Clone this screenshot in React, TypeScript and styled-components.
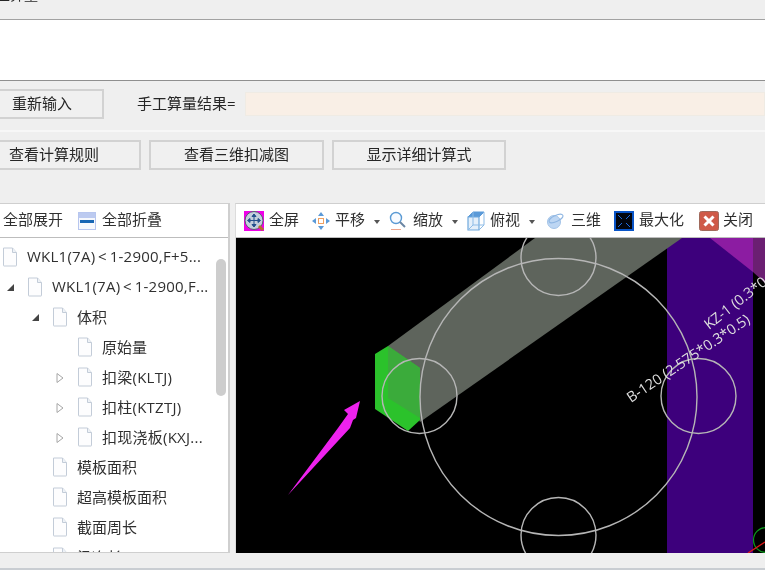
import React from "react";
import styled, { createGlobalStyle } from "styled-components";

const Global = createGlobalStyle`
  html, body { margin: 0; padding: 0; background: #efefef; overflow: hidden; }
  #root { width: 765px; height: 570px; overflow: hidden; }
`;

const Page = styled.div`
  width: 765px; height: 570px; overflow: hidden; background: #efefef; color: #262626;
  display: flex; flex-direction: column;
  font-family: "Open Sans", "Noto Sans CJK SC", "Noto Sans", sans-serif; font-size: 15px;
  filter: blur(0.45px);
`;
const TitleBar = styled.div`
  height: 19px; flex: none; overflow: hidden; border-bottom: 1px solid #a2a2a2;
`;
const TitleText = styled.div`
  margin: -16px 0 0 -18px; font-size: 14px; line-height: 22px; white-space: nowrap;
`;
const NoteArea = styled.div`
  height: 60px; flex: none; background: #fff; border-bottom: 1px solid #8f8f8f;
`;
const InputRow = styled.div`
  height: 41px; flex: none; padding-top: 8px; display: flex; align-items: flex-start;
  border-bottom: 2px solid #f7f7f7; margin-left: -20px;
`;
const Btn = styled.div<{ $w: number }>`
  width: ${p => p.$w}px; height: 30px; box-sizing: border-box; flex: none; padding-bottom: 2px;
  border: 2px solid #d2d2d2; background: #f0f0f0; display: flex;
  align-items: center; justify-content: center; line-height: 1; white-space: nowrap;
`;
const ResultLabel = styled.div`
  margin-left: 33px; height: 30px; line-height: 28px; width: 108px; flex: none; white-space: nowrap;
`;
const ResultInput = styled.div`
  margin-top: 3px; flex: 1; height: 24px; box-sizing: border-box;
  background: #f9efe6; border: 1px solid #efebe4;
`;
const ActionRow = styled.div`
  height: 30px; flex: none; margin: 8px 0 0 -33px; display: flex; gap: 8px;
`;
const Panels = styled.div`
  margin-top: 33px; height: 350px; flex: none; display: flex; gap: 5px;
`;
const LeftPanel = styled.div`
  width: 230px; flex: none; box-sizing: border-box; display: flex; flex-direction: column;
  border: 1px solid #cfcfcf; border-left: 0; border-right-width: 2px; background: #fff;
`;
const RightPanel = styled.div`
  flex: 1; min-width: 0; box-sizing: border-box; display: flex; flex-direction: column;
  border-top: 1px solid #cfcfcf; border-left: 1px solid #dcdcdc; background: #fff;
`;
const Toolbar = styled.div`
  height: 33px; flex: none; display: flex; align-items: center; background: #fff;
  border-bottom: 1px solid #bdbdbd; white-space: nowrap; color: #303030;
`;
const ToolItem = styled.div<{ $ml: number; $gap: number }>`
  display: flex; align-items: center; flex: none; height: 26px;
  margin-left: ${p => p.$ml}px; gap: ${p => p.$gap}px; line-height: 1;
`;
const ToolLabel = styled.span`
  margin-top: -2px;
`;
const Caret = styled.span<{ $ml: number }>`
  width: 0; height: 0; margin-left: ${p => p.$ml}px; margin-top: 2px;
  border: 3px solid transparent; border-top: 4px solid #555; border-bottom: 0;
`;
const Tree = styled.div`
  flex: 1; min-height: 0; overflow: hidden; position: relative; padding-top: 4px;
`;
const Row = styled.div<{ $level: number }>`
  height: 30px; display: flex; align-items: center; white-space: nowrap;
  padding-left: ${p => 2 + p.$level * 25}px; gap: 9px; position: relative; color: #303030;
`;
const RowText = styled.span<{ $latin: boolean }>`
  margin-top: -2px; letter-spacing: ${p => (p.$latin ? "0.25px" : "0")};
`;
const Toggle = styled.span`
  position: absolute; top: 10px; margin-left: -22px; display: flex;
`;
const Scrollbar = styled.div`
  position: absolute; left: 216px; top: 21px; width: 10px; height: 137px;
  border-radius: 5px; background: #cdcdcd;
`;
const Canvas = styled.div`
  flex: 1; min-height: 0; background: #000; display: flex;
`;
const Scene = styled.svg`
  display: block; width: 529px; height: 315px; flex: none;
`;
const SceneLabel = styled.text`
  font-family: "Open Sans", "Liberation Sans", sans-serif; font-size: 14.5px; fill: #dedede;
`;
const BottomBar = styled.div`
  height: 15px; flex: none; background: #efefef; border-bottom: 2px solid #c9cdd2;
`;

const Doc = () => (
  <svg width="16" height="20" viewBox="0 0 16 20" style={{ flex: "none" }}>
    <path d="M1.5 1h9l4 4.5V18.5q0 .5-.5.5H2q-.5 0-.5-.5z" fill="#fdfdfe" stroke="#c3ccd8" />
    <path d="M10.5 1v4.5h4" fill="#eef2f7" stroke="#c3ccd8" />
  </svg>
);
const Open = () => (
  <svg width="10" height="10" viewBox="0 0 10 10"><path d="M9 2v7H2z" fill="#444" /></svg>
);
const Closed = () => (
  <svg width="10" height="12" viewBox="0 0 10 12"><path d="M2 1.5l6 4.5-6 4.5z" fill="#fff" stroke="#a6a6a6" /></svg>
);

const FullIcon = () => (
  <svg width="20" height="20" viewBox="0 0 20 20">
    <rect width="20" height="20" fill="#f000e8" />
    <circle cx="10" cy="9.5" r="9" fill="#c4cfdc" stroke="#55606f" />
    <path d="M15 15l4 4" stroke="#b5702c" strokeWidth="3" />
    <path d="M10 3.5v12M4 9.5h12M10 3l-2 2.5h4zM10 16l-2-2.5h4zM3.5 9.5l2.5-2v4zM16.5 9.5l-2.5-2v4z" fill="#24508c" stroke="#24508c" />
  </svg>
);
const PanIcon = () => (
  <svg width="18" height="18" viewBox="0 0 18 18">
    <rect x="6.5" y="6.5" width="5" height="5" fill="#fff" stroke="#f0a060" />
    <path d="M9 0l3 4H6zM9 18l3-4H6zM0 9l4-3v6zM18 9l-4-3v6z" fill="#5b9ad8" />
  </svg>
);
const ZoomIcon = () => (
  <svg width="20" height="20" viewBox="0 0 20 20">
    <circle cx="8" cy="7" r="5.5" fill="#f8fbff" stroke="#5a9ad4" strokeWidth="1.4" />
    <path d="M12 11l5 5" stroke="#6b86a3" strokeWidth="2" />
    <path d="M3 18.5h10" stroke="#eda58c" />
  </svg>
);
const TopIcon = () => (
  <svg width="18" height="20" viewBox="0 0 18 20" fill="none" stroke="#8dbbe6">
    <path d="M1 6l5-5h11l-5 5z" fill="#5b9ad8" stroke="#5b9ad8" />
    <path d="M1 6h11v13H1z" fill="#e4effa" stroke="#6fa8dc" strokeWidth="1.2" />
    <path d="M12 19l5-5V1M1 19l5-5h11M6 14V1" strokeWidth="1" />
  </svg>
);
const OrbitIcon = () => (
  <svg width="18" height="18" viewBox="0 0 18 18">
    <circle cx="8" cy="10" r="6.5" fill="#bdd6f3" stroke="#a4c4e8" />
    <ellipse cx="10" cy="6.5" rx="7.5" ry="3" fill="none" stroke="#8fb6e2" transform="rotate(-25 10 6.5)" />
  </svg>
);
const MaxIcon = () => (
  <svg width="20" height="20" viewBox="0 0 20 20">
    <rect x="1" y="1" width="18" height="18" fill="#02060f" stroke="#0a55c8" strokeWidth="2" />
    <path d="M4 4l4 4M16 4l-4 4M4 16l4-4M16 16l-4-4" stroke="#1e6be0" />
  </svg>
);
const CloseIcon = () => (
  <svg width="20" height="20" viewBox="0 0 20 20">
    <rect x=".5" y=".5" width="19" height="19" rx="2" fill="#cf5a48" stroke="#a06a5c" />
    <path d="M5.5 5.5l9 9M14.5 5.5l-9 9" stroke="#fff" strokeWidth="3" />
  </svg>
);
const CollapseIcon = () => (
  <svg width="18" height="18" viewBox="0 0 18 18">
    <rect x=".5" y=".5" width="17" height="17" fill="#f6f8fd" stroke="#b7c6ef" />
    <rect x="1" y="1" width="16" height="5" fill="#bccaf0" />
    <rect x="2" y="8" width="14" height="3" fill="#1766b4" />
  </svg>
);

const tools = [
  { label: "全屏", icon: <FullIcon />, ml: 8, gap: 5 },
  { label: "平移", icon: <PanIcon />, ml: 13, gap: 5, caret: 9 },
  { label: "缩放", icon: <ZoomIcon />, ml: 8, gap: 5, caret: 9 },
  { label: "俯视", icon: <TopIcon />, ml: 9, gap: 5, caret: 9 },
  { label: "三维", icon: <OrbitIcon />, ml: 11, gap: 7 },
  { label: "最大化", icon: <MaxIcon />, ml: 13, gap: 5 },
  { label: "关闭", icon: <CloseIcon />, ml: 15, gap: 4 },
];

type Node = { text: string; level: number; toggle?: "open" | "closed" };
const nodes: Node[] = [
  { text: "WKL1(7A)\u2009<\u20091-2900,F+5...", level: 0 },
  { text: "WKL1(7A)\u2009<\u20091-2900,F...", level: 1, toggle: "open" },
  { text: "体积", level: 2, toggle: "open" },
  { text: "原始量", level: 3 },
  { text: "扣梁(KLTJ)", level: 3, toggle: "closed" },
  { text: "扣柱(KTZTJ)", level: 3, toggle: "closed" },
  { text: "扣现浇板(KXJ...", level: 3, toggle: "closed" },
  { text: "模板面积", level: 2 },
  { text: "超高模板面积", level: 2 },
  { text: "截面周长", level: 2 },
  { text: "梁净长", level: 2 },
];

const CanvasScene = () => (
  <Scene viewBox="236 238 529 315">
    <rect x="667" y="238" width="86" height="315" fill="#3d007c" />
    <path d="M710 238L753 272V238z" fill="#8c1ca2" />
    <path d="M753 238h12v45l-12-11z" fill="#6b1f72" />
    <path d="M388 346L535 238H682L420 422z" fill="#5e645c" />
    <path d="M375 354l13-8 32 22v52l-12 11-33-22z" fill="#2bc22b" />
    <path d="M388 346l32 22v50l-32-20z" fill="#3bab3b" />
    <g fill="none" stroke="#b6b6b6" strokeWidth="1.4">
      <circle cx="558.5" cy="397" r="138.5" />
      <circle cx="558.5" cy="258" r="37.5" />
      <circle cx="558.5" cy="535" r="37.5" />
      <circle cx="419.5" cy="396" r="37.5" />
      <circle cx="698.5" cy="396" r="37.5" />
    </g>
    <circle cx="766" cy="540" r="12.5" fill="none" stroke="#0c9a1c" strokeWidth="1.2" />
    <path d="M748 553L765 542" stroke="#e01818" strokeWidth="1.4" />
    <path d="M288 495L338 428L348 414L344 410L360 401L356 418L353 420L350 428z" fill="#ee22ee" />
    <SceneLabel transform="translate(631 403) rotate(-34)">B-120 (2.575*0.3*0.5)</SceneLabel>
    <SceneLabel transform="translate(709 330) rotate(-38)">KZ-1 (0.3*0.5)</SceneLabel>
  </Scene>
);

export default function App() {
  return (
    <Page>
      <Global />
      <TitleBar><TitleText>手工算量</TitleText></TitleBar>
      <NoteArea />
      <InputRow>
        <Btn $w={124}>重新输入</Btn>
        <ResultLabel>手工算量结果=</ResultLabel>
        <ResultInput />
      </InputRow>
      <ActionRow>
        <Btn $w={174}>查看计算规则</Btn>
        <Btn $w={175}>查看三维扣减图</Btn>
        <Btn $w={174}>显示详细计算式</Btn>
      </ActionRow>
      <Panels>
        <LeftPanel>
          <Toolbar>
            <ToolItem $ml={3} $gap={0}><ToolLabel>全部展开</ToolLabel></ToolItem>
            <ToolItem $ml={15} $gap={6}><CollapseIcon /><ToolLabel>全部折叠</ToolLabel></ToolItem>
          </Toolbar>
          <Tree>
            {nodes.map(n => (
              <Row key={n.text} $level={n.level}>
                {n.toggle && <Toggle>{n.toggle === "open" ? <Open /> : <Closed />}</Toggle>}
                <Doc />
                <RowText $latin={/[A-Z]/.test(n.text)}>{n.text}</RowText>
              </Row>
            ))}
            <Scrollbar />
          </Tree>
        </LeftPanel>
        <RightPanel>
          <Toolbar>
            {tools.map(t => (
              <ToolItem key={t.label} $ml={t.ml} $gap={t.gap}>
                {t.icon}
                <ToolLabel>{t.label}</ToolLabel>
                {t.caret && <Caret $ml={t.caret - t.gap} />}
              </ToolItem>
            ))}
          </Toolbar>
          <Canvas><CanvasScene /></Canvas>
        </RightPanel>
      </Panels>
      <BottomBar />
    </Page>
  );
}
